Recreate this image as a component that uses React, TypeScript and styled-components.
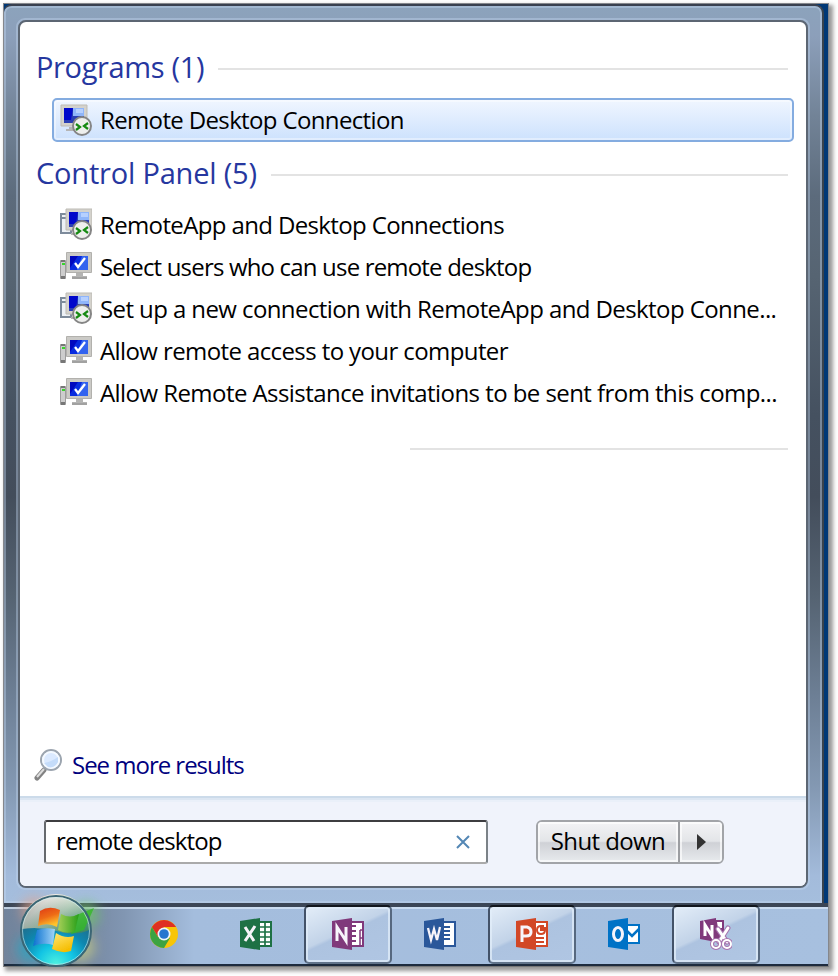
import React from "react";
import styled, { createGlobalStyle } from "styled-components";

const Global = createGlobalStyle`
  * { box-sizing: border-box; }
  body { margin: 0; background: #fefefe; font-family: "Open Sans", "Noto Sans", sans-serif; font-size: 24px; color: #000; }
`;

const Page = styled.div`width: 838px; height: 976px; padding: 3px 0 0 3px; overflow: hidden;`;

const Desktop = styled.main`
  width: 826px; height: 964px;
  border: 1px solid #85878c; border-bottom-color: #777;
  background: #003876;
  box-shadow: 3px 3px 4px 1px rgba(0, 0, 0, 0.4);
  display: flex; flex-direction: column;
`;

const Frame = styled.section`
  width: 820px; height: 899px;
  border-top: 2px solid #39404f; border-right: 2px solid #39434d;
  border-radius: 8px 9px 0 0;
  background: linear-gradient(180deg, #8ca3bc 0, #8c9fba 30px, #728397 110px, #5c6b7c 190px, #566472 270px, #455160 410px, #434d5b 490px, #556372 590px, #6d7f95 690px, #8398b2 780px, #a3bbdb 870px, #a5bedd 100%);
  overflow: hidden;
`;

const Rim = styled.div`
  height: 100%;
  border: 2px solid rgba(195, 215, 240, 0.4);
  border-radius: 7px 7px 0 0;
  padding: 10px;
`;

const Groove = styled.div`
  height: 872px;
  border: 2px solid rgba(195, 215, 240, 0.4);
  border-radius: 9px;
`;

const Panel = styled.div`
  height: 868px;
  border: 2px solid #5c6673; border-radius: 8px;
  background: #fff; overflow: hidden;
  display: flex; flex-direction: column;
`;

const Results = styled.div`
  height: 774px; display: flex; flex-direction: column; padding: 24px 12px 0 16px;
`;

const Text = styled.span<{ $track?: number; $lift?: number }>`
  white-space: pre; padding-bottom: ${(p) => p.$lift ?? 3}px; letter-spacing: ${(p) => p.$track ?? 0}px;
`;

const Heading = styled.h2`
  margin: 0; height: 44px; padding-right: 6px;
  display: flex; align-items: center; gap: 14px;
  font-size: 29px; font-weight: 400; color: #26379f;
`;

const Rule = styled.i<{ $left?: number }>`
  height: 2px; flex: 1; margin: 2px 0 0 ${(p) => p.$left ?? 0}px; background: #e3e3e3;
`;

const Row = styled.div<{ $selected?: boolean }>`
  height: ${(p) => (p.$selected ? 44 : 42)}px;
  margin-left: 16px; padding-left: 6px;
  display: flex; align-items: center; gap: 8px;
  border: 2px solid ${(p) => (p.$selected ? "#84ace0" : "transparent")};
  border-radius: 5px;
  background: ${(p) => (p.$selected ? "linear-gradient(#f0f6ff, #cde2fd)" : "none")};
  box-shadow: ${(p) => (p.$selected ? "inset 0 0 0 2px rgba(255,255,255,.4)" : "none")};
  svg { flex: none; }
`;

const Programs = styled.div`height: 62px; padding-top: 8px;`;
const List = styled.div`height: 230px; padding-top: 7px;`;
const Divider = styled.div`display: flex; height: 4px; padding-right: 6px; margin-top: 20px;`;

const More = styled.a`
  margin: auto 0 0 -2px; height: 62px; display: flex; align-items: center; gap: 10px; color: #00007e;
`;

const Footer = styled.footer`
  height: 90px; padding: 24px 24px 0; display: flex;
  background: linear-gradient(#ccdbea 0 2px, #dce6f2 2px 4px, #eaf0f9 4px 6px, #f0f3fb 6px);
`;

const Search = styled.div`
  width: 444px; height: 44px; padding: 0 15px 0 10px;
  display: flex; align-items: center; justify-content: space-between;
  background: #fff; border: 2px solid; border-color: #3d3d40 #7b8287 #aaa #66696d; border-radius: 3px;
`;

const ButtonGroup = styled.div`
  margin-left: 48px; width: 188px; height: 44px; display: flex;
  border: 2px solid #a2a4a8; border-radius: 6px; overflow: hidden;
`;

const Button = styled.button<{ $w: number }>`
  width: ${(p) => p.$w}px; height: 40px; padding: 0; border: 0; color: #000;
  font: inherit; display: flex; align-items: center; justify-content: center;
  background: linear-gradient(#f3f3f5, #e3e5e8 48%, #cfd1d6 52%, #e8ebee);
  box-shadow: inset 0 0 0 2px rgba(255,255,255,.65);
  & + & { border-left: 2px solid #9b9da1; }
`;

const Taskbar = styled.nav`
  height: 63px; flex: none; position: relative;
  border-top: 4px solid #3b4656; border-bottom: 2px solid #1d2b3e;
  background: linear-gradient(rgba(215,231,248,.75) 0 2px, transparent 2px),
    linear-gradient(90deg, #72849c 0, #788ba5 90px, #8196b2 120px, #a4bddd 190px, #a7c0df 100%);
  display: flex; padding-left: 114px;
`;

const Task = styled.div<{ $open?: boolean }>`
  width: 88px; height: 59px; margin: -2px 2px 0; flex: none;
  display: flex; align-items: center; justify-content: center; padding-bottom: 1px;
  border-style: solid; border-width: 2px;
  border-color: ${(p) => (p.$open ? "#11161d #56687f #60738a #435268" : "transparent")};
  border-radius: 5px;
  background: ${(p) => (p.$open ? "linear-gradient(155deg, #e3edf8 0%, #c2d3e8 44%, #adc3e0 48%, #b0c6e3 100%)" : "none")};
  box-shadow: ${(p) => (p.$open ? "inset 0 0 0 2px rgba(225,237,250,.75)" : "none")};
`;

const Tasks = styled.div`display: flex; gap: 0;`;

/* The orb rises above the top edge of the taskbar. */
const Start = styled.div`position: absolute; left: 0; top: -20px; width: 110px; height: 80px;`;

function RemoteIcon({ app = false }: { app?: boolean }) {
  return (
    <svg width="32" height="32" viewBox="0 0 32 32">
      {app && <><path d="M1 6h10v19H1z" fill="#edf1f5" stroke="#7d8b9b" strokeWidth="2" /><path d="M2 10h8" stroke="#7d8b9b" strokeWidth="2" /></>}
      <g transform={app ? "translate(5 0)" : ""}>
        <path d="M1 1h26v21H1z" fill="#d4d2cc" stroke="#bdbbb5" />
        <path d="M4 4h20v15H4z" fill="#2a3fb4" />
        <path d="M13 4h11v8H13z" fill="#8fb5fa" /><path d="M16 5h7v4h-7z" fill="#b6d0ff" />
        <path d="M4 4h9l-2 12H4z" fill="#0007cb" />
        <path d="M9 23h7v2h3v2H6v-2h3z" fill="#b5b5b5" />
      </g>
      <circle cx="22" cy="22" r="9" fill="#eeefed" stroke="#858585" strokeWidth="2" />
      <path d="m16 20 4 3-4 3M28 19l-4 3 4 3" fill="none" stroke="#168a12" strokeWidth="2.2" />
    </svg>
  );
}

function SystemIcon() {
  return (
    <svg width="32" height="32" viewBox="0 0 32 32">
      <path d="M.5 10.500h5v18h-5z" fill="#cdcdcd" stroke="#9c9c9c" /><path d="M2 13h3v2H2z" fill="#37d52b" /><path d="M1 10h4v2H1zM1 26h4v3H1z" fill="#777" />
      <path d="M6.500 2.500h25v20h-25z" fill="#cbcac6" stroke="#b2b1ad" />
      <path d="M10 6h18v14H10z" fill="#082bdf" /><path d="M22 6h6v14H17z" fill="#3263ef" /><path d="M10 6h8l-8 12z" fill="#0007bf" />
      <path d="m15 13 3 4 7-9" fill="none" stroke="#fff" strokeWidth="2.300" />
      <path d="M16 23h7v3h4v3H12v-3h4z" fill="#b4b4b3" /><path d="M12 28h15" stroke="#8f8f8f" />
    </svg>
  );
}

function Magnifier() {
  return (
    <svg width="28" height="34" viewBox="0 0 28 34">
      <path d="m10 22-7 8" stroke="#828282" strokeWidth="5" strokeLinecap="round" /><path d="m10 21-7 8" stroke="#ddd" strokeWidth="2" />
      <circle cx="17" cy="12" r="10" fill="#dbeaff" stroke="#9ca5af" strokeWidth="2" />
      <circle cx="17" cy="12" r="8" fill="none" stroke="#f5faff" strokeWidth="2" /><path d="M10 15q7-1 14-6v5q-4 7-10 5z" fill="#c4dcfa" />
    </svg>
  );
}

function Orb() {
  return (
    <svg width="110" height="80" viewBox="4 886 110 80">
      <defs>
        <radialGradient id="base" cx=".5" cy=".98" r=".9"><stop stopColor="#4ff2df" /><stop offset=".3" stopColor="#12c4e4" /><stop offset=".55" stopColor="#0d87b0" /><stop offset="1" stopColor="#31586d" /></radialGradient>
        <linearGradient id="gloss" x1="0" x2="1" y2=".6"><stop stopColor="#d39a88" /><stop offset=".35" stopColor="#d9cdc2" /><stop offset=".65" stopColor="#a9c9a2" /><stop offset="1" stopColor="#3f9560" /></linearGradient>
        <linearGradient id="shine" x2="0" y2="1"><stop stopColor="#fff" stopOpacity=".6" /><stop offset="1" stopColor="#2f6a6a" stopOpacity=".35" /></linearGradient>
        <linearGradient id="red" x2=".4" y2="1"><stop stopColor="#de3a16" /><stop offset=".55" stopColor="#ee6b17" /><stop offset="1" stopColor="#ffc42c" /></linearGradient>
        <linearGradient id="green" x2="1"><stop stopColor="#a6cf58" /><stop offset="1" stopColor="#269f18" /></linearGradient>
        <linearGradient id="blue"><stop stopColor="#0870cf" /><stop offset="1" stopColor="#a2d5f9" /></linearGradient>
        <linearGradient id="yellow" x2=".5" y2="1"><stop stopColor="#ffe879" /><stop offset="1" stopColor="#f5bd00" /></linearGradient>
        <filter id="glow" x="-.3" y="-.3" width="1.6" height="1.6"><feGaussianBlur stdDeviation="6" /></filter>
        <filter id="soft"><feGaussianBlur stdDeviation=".6" /></filter>
      </defs>
      <g filter="url(#glow)" opacity=".65"><circle cx="34" cy="909" r="13" fill="#e5a58b" /><circle cx="86" cy="914" r="13" fill="#72cb65" /><circle cx="31" cy="948" r="14" fill="#24a9c6" /><circle cx="80" cy="946" r="15" fill="#c8cd82" /></g>
      <circle cx="56" cy="930" r="35" fill="url(#base)" />
      <path d="M21 928a35 35 0 0 1 70 0q-16 8-34 2-18-5-36-2" fill="url(#gloss)" />
      <path d="M21 928a35 35 0 0 1 70 0q-16 8-34 2-18-5-36-2" fill="url(#shine)" />
      <g filter="url(#soft)">
        <path d="M74 915l20-8-10 22-13 4z" fill="#32b927" opacity=".8" />
        <path d="M40 910q9-6 20-1l-3 17q-9-5-19-1z" fill="url(#red)" />
        <path d="M61 913q9 5 18 0l-4 17q-8 4-17-1z" fill="url(#green)" />
        <path d="M37 929q8-3 18-1l-2 16q-9-3-20 1z" fill="url(#blue)" />
        <path d="M56 932q9 6 18 3l-3 15q-9 3-19-2z" fill="url(#yellow)" />
      </g>
      <circle cx="56" cy="930" r="35" fill="none" stroke="#3b6675" strokeWidth="2" /><circle cx="56" cy="930" r="33.500" fill="none" stroke="#d3efef" opacity=".6" />
    </svg>
  );
}

function Chrome() {
  return (
    <svg width="32" height="32" viewBox="0 0 32 32">
      <circle cx="16" cy="16" r="14" fill="#f8c507" />
      <path d="M3.900 9A14 14 0 0 1 28.100 9H16l-6 10z" fill="#df3022" />
      <path d="M3.900 9A14 14 0 0 0 16 30l6-10-12-1z" fill="#3ca342" />
      <circle cx="16" cy="16" r="6.500" fill="#eef5fa" /><circle cx="16" cy="16" r="4.800" fill="#2676cf" />
    </svg>
  );
}

const officeColors = { excel: "#1e7145", onenote: "#80397b", word: "#2a579a", ppt: "#d24726", outlook: "#0072c6" };
type OfficeKind = keyof typeof officeColors;

function OfficeIcon({ kind }: { kind: OfficeKind }) {
  const color = officeColors[kind];
  return (
    <svg width="32" height="32" viewBox="0 0 32 32">
      {kind === "outlook" ? <><path d="M18 7h13v18H18z" fill="#fff" stroke={color} strokeWidth="2" /><path d="m19 13 5 5 8-8" fill="none" stroke={color} strokeWidth="2.500" /></>
        : <path d="M18 4h13v24H18z" fill="#fff" stroke={color} strokeWidth="2" />}
      {kind === "excel" && <path d="M25 4v24M19 9h12M19 14h12M19 19h12M19 24h12" stroke={color} strokeWidth="1.700" />}
      {kind === "word" && <path d="M19 9h7M19 13h7M19 17h7M19 21h7" stroke={color} strokeWidth="2" />}
      {kind === "onenote" && <><path d="M18 8h6M18 13h6M18 18h6M18 23h6" stroke={color} strokeWidth="2" /><path d="M28 12h3M28 20h3M28 12v16" stroke={color} strokeWidth="1.500" /></>}
      {kind === "ppt" && <path d="M21 12q0 4 4 4t4-4h-4V8q-4 0-4 4M27 7v3h3M20 20h8M20 24h8" fill="none" stroke={color} strokeWidth="2" />}
      <path d="m0 3 20-3v32L0 29z" fill={color} />
      <g fill="none" stroke="#f7f4fa" strokeWidth="3">
        {kind === "excel" && <path d="m5 9 9 14M15 8 5 23" />}
        {kind === "onenote" && <path d="M5 23V9l9 14V9" />}
        {kind === "word" && <path strokeWidth="2.300" d="m4 10 3 12 3-11 3 11 3-13" />}
        {kind === "ppt" && <path d="M6 24V9h5q4 1 4 5 0 4-5 4H6" />}
        {kind === "outlook" && <ellipse cx="10" cy="16" rx="4.500" ry="6.500" />}
      </g>
    </svg>
  );
}

function Clipper() {
  return (
    <svg width="32" height="32" viewBox="0 0 32 32">
      <path d="m0 3 16-3v2h8v20l-8 2L0 21z" fill="#80397b" /><path d="M17 4h5v6h-4z" fill="#fff" />
      <path d="M5 18V7l7 11V7" fill="none" stroke="#fff" strokeWidth="3" />
      <g fill="none" strokeLinecap="round"><path d="m18 11 9 13M28 10l-9 14" stroke="#a673ae" strokeWidth="5" /><path d="m18 11 9 13M28 10l-9 14" stroke="#fff" strokeWidth="3" />
      <circle cx="16" cy="26" r="4" stroke="#a673ae" strokeWidth="4" /><circle cx="27" cy="26" r="4" stroke="#a673ae" strokeWidth="4" /><circle cx="16" cy="26" r="4" stroke="#fff" strokeWidth="2" /><circle cx="27" cy="26" r="4" stroke="#fff" strokeWidth="2" /></g>
    </svg>
  );
}

const panelItems = [
  { text: "RemoteApp and Desktop Connections", remote: true, track: -0.63 },
  { text: "Select users who can use remote desktop", track: -0.82 },
  { text: "Set up a new connection with RemoteApp and Desktop Conne...", remote: true, track: -0.59 },
  { text: "Allow remote access to your computer", track: -0.6 },
  { text: "Allow Remote Assistance invitations to be sent from this comp...", track: -0.56 },
];

export default function App() {
  return (
    <Page>
      <Global />
      <Desktop>
        <Frame><Rim><Groove><Panel>
          <Results>
            <Heading><Text $track={-0.35}>Programs (1)</Text><Rule /></Heading>
            <Programs><Row $selected><RemoteIcon /><Text $track={-0.64} $lift={2}>Remote Desktop Connection</Text></Row></Programs>
            <Heading><Text $track={-0.2}>Control Panel (5)</Text><Rule /></Heading>
            <List>{panelItems.map((item) => (
              <Row key={item.text}>{item.remote ? <RemoteIcon app /> : <SystemIcon />}<Text $track={item.track} $lift={0}>{item.text}</Text></Row>
            ))}</List>
            <Divider><Rule $left={374} /></Divider>
            <More><Magnifier /><Text $track={-1.02} $lift={1}>See more results</Text></More>
          </Results>
          <Footer>
            <Search><Text $track={-0.9}>remote desktop</Text>
              <svg width="16" height="14" viewBox="0 0 16 14"><path d="m2 1 12 12M14 1 2 13" stroke="#5487b5" strokeWidth="2" /></svg>
            </Search>
            <ButtonGroup>
              <Button $w={140}><Text $track={-0.6}>Shut down</Text></Button>
              <Button $w={44}><svg width="9" height="16" viewBox="0 0 9 16"><path d="M0 0v16l9-8z" fill="#333" /></svg></Button>
            </ButtonGroup>
          </Footer>
        </Panel></Groove></Rim></Frame>
        <Taskbar>
          <Start><Orb /></Start>
          <Tasks>
            <Task><Chrome /></Task>
            <Task><OfficeIcon kind="excel" /></Task>
            <Task $open><OfficeIcon kind="onenote" /></Task>
            <Task><OfficeIcon kind="word" /></Task>
            <Task $open><OfficeIcon kind="ppt" /></Task>
            <Task><OfficeIcon kind="outlook" /></Task>
            <Task $open><Clipper /></Task>
          </Tasks>
        </Taskbar>
      </Desktop>
    </Page>
  );
}
